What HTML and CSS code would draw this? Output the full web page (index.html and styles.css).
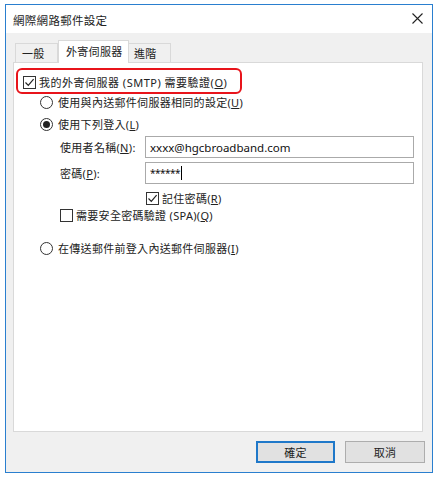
FILE: index.html
```html
<!DOCTYPE html>
<html lang="zh-Hant">
<head>
<meta charset="utf-8">
<title>網際網路郵件設定</title>
<link rel="stylesheet" href="styles.css">
</head>
<body>
<div class="window">
  <div class="titlebar">
    <span class="title">網際網路郵件設定</span>
    <svg class="close" width="11" height="11" viewBox="0 0 11 11"><path d="M0.5 0.5 L10.5 10.5 M10.5 0.5 L0.5 10.5" stroke="#222" stroke-width="1.1" fill="none"/></svg>
  </div>
  <div class="content">
    <div class="tabs">
      <div class="tab tab-general">一般</div>
      <div class="tab tab-active">外寄伺服器</div>
      <div class="tab tab-adv">進階</div>
    </div>
    <div class="panel">
      <div class="highlight"></div>
      <div class="row row-main">
        <span class="check checked"><svg width="11" height="11" viewBox="0 0 11 11"><path d="M1.5 5.5 L4.3 8.3 L9.6 2.2" stroke="#222" stroke-width="1.2" fill="none"/></svg></span>
        <span class="label">我的外寄伺服器 (SMTP) 需要驗證(<u>O</u>)</span>
      </div>
      <div class="row row-r1">
        <span class="radio"></span>
        <span class="label">使用與內送郵件伺服器相同的設定(<u>U</u>)</span>
      </div>
      <div class="row row-r2">
        <span class="radio on"></span>
        <span class="label">使用下列登入(<u>L</u>)</span>
      </div>
      <div class="fields">
        <span class="flabel">使用者名稱(<u>N</u>):</span>
        <div class="input">xxxx@hgcbroadband.com</div>
        <span class="flabel">密碼(<u>P</u>):</span>
        <div class="input pw">******<span class="caret"></span></div>
      </div>
      <div class="row row-remember">
        <span class="check checked"><svg width="11" height="11" viewBox="0 0 11 11"><path d="M1.5 5.5 L4.3 8.3 L9.6 2.2" stroke="#222" stroke-width="1.2" fill="none"/></svg></span>
        <span class="label">記住密碼(<u>R</u>)</span>
      </div>
      <div class="row row-spa">
        <span class="check"></span>
        <span class="label">需要安全密碼驗證 (SPA)(<u>Q</u>)</span>
      </div>
      <div class="row row-r3">
        <span class="radio"></span>
        <span class="label">在傳送郵件前登入內送郵件伺服器(<u>I</u>)</span>
      </div>
    </div>
    <div class="footer">
      <div class="btn btn-default">確定</div>
      <div class="btn">取消</div>
    </div>
  </div>
</div>
</body>
</html>
```

FILE: styles.css
```css
html, body {
  margin: 0;
  padding: 0;
  background: #ffffff;
}
body {
  font-family: "Noto Sans", "Noto Sans CJK TC", sans-serif;
  font-size: 11px;
  color: #222;
}
.window {
  margin: 4px 0 0 5px;
  width: 428px;
  height: 469px;
  box-sizing: border-box;
  border: 1px solid #2a7fcf;
  background: #f0f0f0;
  display: flex;
  flex-direction: column;
}
.titlebar {
  height: 28px;
  background: #ffffff;
  display: flex;
  align-items: center;
  justify-content: space-between;
  padding: 0 9px 0 7px;
}
.title {
  font-size: 11.5px;
  letter-spacing: 0.3px;
  color: #222;
  padding-top: 1px;
}
.close {
  display: block;
  margin-top: -1px;
}
.content {
  padding: 7px 9px 0 7px;
  display: flex;
  flex-direction: column;
}
.tabs {
  height: 22px;
  display: flex;
  align-items: flex-end;
  padding-left: 2px;
}
.tab {
  box-sizing: border-box;
  border: 1px solid #d9d9d9;
  border-bottom: none;
  height: 19px;
  display: flex;
  align-items: center;
  padding-left: 6px;
  background: #f0f0f0;
  color: #222;
  letter-spacing: 0.3px;
}
.tab-general { width: 43px; }
.tab-active {
  width: 71px;
  height: 23px;
  margin-bottom: -1px;
  background: #ffffff;
  position: relative;
  z-index: 1;
  padding-left: 7px;
  padding-bottom: 3px;
}
.tab-adv { width: 42px; padding-left: 5px; border-left: none; }
.panel {
  position: relative;
  height: 370px;
  box-sizing: border-box;
  border: 1px solid #d9d9d9;
  background: #ffffff;
  padding: 11px 0 0 0;
  display: flex;
  flex-direction: column;
}
.highlight {
  position: absolute;
  left: 2px;
  top: 5px;
  width: 226px;
  height: 26px;
  box-sizing: border-box;
  border: 2px solid #e8141b;
  border-radius: 6px;
}
.row {
  height: 16px;
  display: flex;
  align-items: center;
}
.label {
  white-space: nowrap;
  color: #222;
  letter-spacing: 0.3px;
}
.row-main { padding-left: 9px; }
.row-main .label { letter-spacing: 0.5px; }
.row-r1 { padding-left: 26px; margin-top: 4px; }
.row-r2 { padding-left: 26px; margin-top: 6px; }
.row-remember { padding-left: 132px; margin-top: 6px; }
.row-spa { padding-left: 46px; margin-top: 1px; }
.row-r3 { padding-left: 26px; margin-top: 17px; }
.check {
  width: 13px;
  height: 13px;
  box-sizing: border-box;
  border: 1px solid #333;
  background: #fff;
  margin-right: 3px;
  display: flex;
  align-items: center;
  justify-content: center;
  flex: none;
}
.check svg { display: block; }
.radio {
  width: 13px;
  height: 13px;
  box-sizing: border-box;
  border: 1px solid #333;
  border-radius: 50%;
  background: #fff;
  margin-right: 5px;
  display: flex;
  align-items: center;
  justify-content: center;
  flex: none;
}
.radio.on::after {
  content: "";
  width: 7px;
  height: 7px;
  border-radius: 50%;
  background: #222;
}
.fields {
  margin-top: 4px;
  padding-left: 46px;
  display: grid;
  grid-template-columns: 85px 269px;
  row-gap: 4px;
  align-items: center;
}
.flabel {
  white-space: nowrap;
  color: #222;
  letter-spacing: 0.3px;
}
.input {
  height: 22px;
  box-sizing: border-box;
  border: 1px solid #aaaaaa;
  background: #fff;
  display: flex;
  align-items: center;
  padding-left: 4px;
  font-size: 11.5px;
  color: #111;
}
.input.pw {
  font-size: 10px;
  letter-spacing: -0.5px;
}
.caret {
  display: inline-block;
  width: 1px;
  height: 14px;
  background: #000;
  margin-left: 1px;
}
.footer {
  margin-top: 9px;
  display: flex;
  justify-content: flex-end;
  gap: 10px;
  margin-right: -2px;
}
.btn {
  width: 80px;
  height: 22px;
  box-sizing: border-box;
  border: 1px solid #adadad;
  background: #e1e1e1;
  display: flex;
  align-items: center;
  justify-content: center;
  color: #222;
  letter-spacing: 0.3px;
}
.btn-default {
  border: 2px solid #1f78c9;
  width: 79px;
}
```
